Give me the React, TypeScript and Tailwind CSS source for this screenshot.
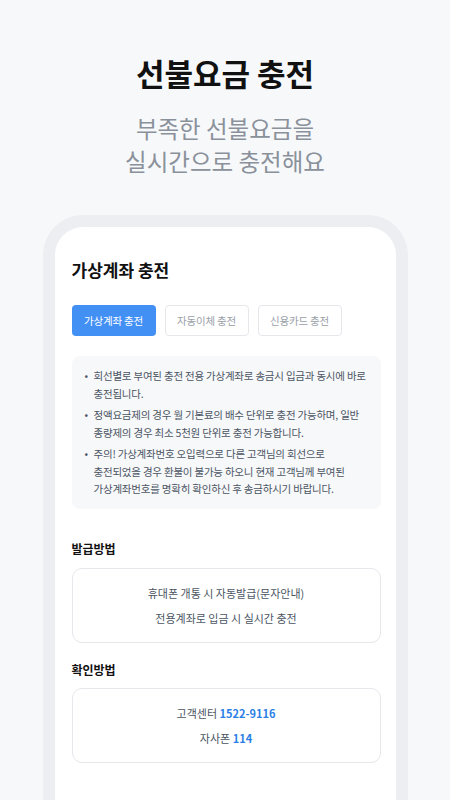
import React from 'react';

const font = { fontFamily: '"Noto Sans CJK KR", "Noto Sans", sans-serif' };

const notices = [
  '회선별로 부여된 충전 전용 가상계좌로 송금시 입금과 동시에 바로 충전됩니다.',
  '정액요금제의 경우 월 기본료의 배수 단위로 충전 가능하며, 일반 종량제의 경우 최소 5천원 단위로 충전 가능합니다.',
  '주의! 가상계좌번호 오입력으로 다른 고객님의 회선으로 충전되었을 경우 환불이 불가능 하오니 현재 고객님께 부여된 가상계좌번호를 명확히 확인하신 후 송금하시기 바랍니다.',
];

const tabs = ['가상계좌 충전', '자동이체 충전', '신용카드 충전'];

export default function App() {
  return (
    <div className="h-[800px] overflow-hidden bg-[#f7f8fa] flex flex-col items-center break-keep" style={font}>
      {/* Hero */}
      <h1 className="mt-[52px] text-[31px] leading-[42px] font-bold text-[#111]">선불요금 충전</h1>
      <p className="mt-[18px] text-[23.5px] leading-[33px] text-[#8a919b] text-center">
        부족한 선불요금을
        <br />
        실시간으로 충전해요
      </p>

      {/* Phone frame */}
      <div className="mt-[37px] w-[365px] flex-1 rounded-t-[40px] bg-[#eceef1] px-3 pt-3">
        <div className="h-full rounded-t-[28px] bg-white pl-[17px] pr-[15px] pt-[30px]">
          <h2 className="text-[17px] leading-[26px] font-bold text-[#111]">가상계좌 충전</h2>

          <div className="mt-[22px] flex gap-[9px]">
            {tabs.map((t, i) => (
              <button
                key={t}
                className={
                  i === 0
                    ? 'w-[84px] h-[31px] rounded-[4px] bg-[#4390f5] text-white text-[10.5px] tracking-[-0.02em]'
                    : 'w-[84px] h-[31px] rounded-[4px] border border-[#e5e7eb] bg-white text-[#9aa0a8] text-[10.5px] tracking-[-0.02em]'
                }
              >
                {t}
              </button>
            ))}
          </div>

          {/* Notice box */}
          <ul className="mt-[20px] rounded-[8px] bg-[#f7f8fa] px-[12px] py-[11px] flex flex-col gap-[4px]">
            {notices.map((n) => (
              <li key={n} className="flex text-[10.5px] leading-[17.5px] text-[#4b5563] tracking-[-0.02em]">
                <span className="w-[10px] shrink-0 pl-[1px]">•</span>
                <span>{n}</span>
              </li>
            ))}
          </ul>

          {/* Issue method */}
          <h3 className="mt-[31px] text-[12px] leading-[18px] font-bold text-[#111]">발급방법</h3>
          <div className="mt-[10px] rounded-[10px] border border-[#e5e7eb] py-[15px] flex flex-col items-center gap-[7px] text-[11px] leading-[18px] text-[#4b5563]">
            <span>휴대폰 개통 시 자동발급(문자안내)</span>
            <span>전용계좌로 입금 시 실시간 충전</span>
          </div>

          {/* Check method */}
          <h3 className="mt-[18px] text-[12px] leading-[18px] font-bold text-[#111]">확인방법</h3>
          <div className="mt-[9px] rounded-[10px] border border-[#e5e7eb] py-[15px] flex flex-col items-center gap-[7px] text-[11px] leading-[18px] text-[#4b5563]">
            <span>
              고객센터 <span className="font-bold text-[#2b7fe6]">1522-9116</span>
            </span>
            <span>
              자사폰 <span className="font-bold text-[#2b7fe6]">114</span>
            </span>
          </div>
        </div>
      </div>
    </div>
  );
}
